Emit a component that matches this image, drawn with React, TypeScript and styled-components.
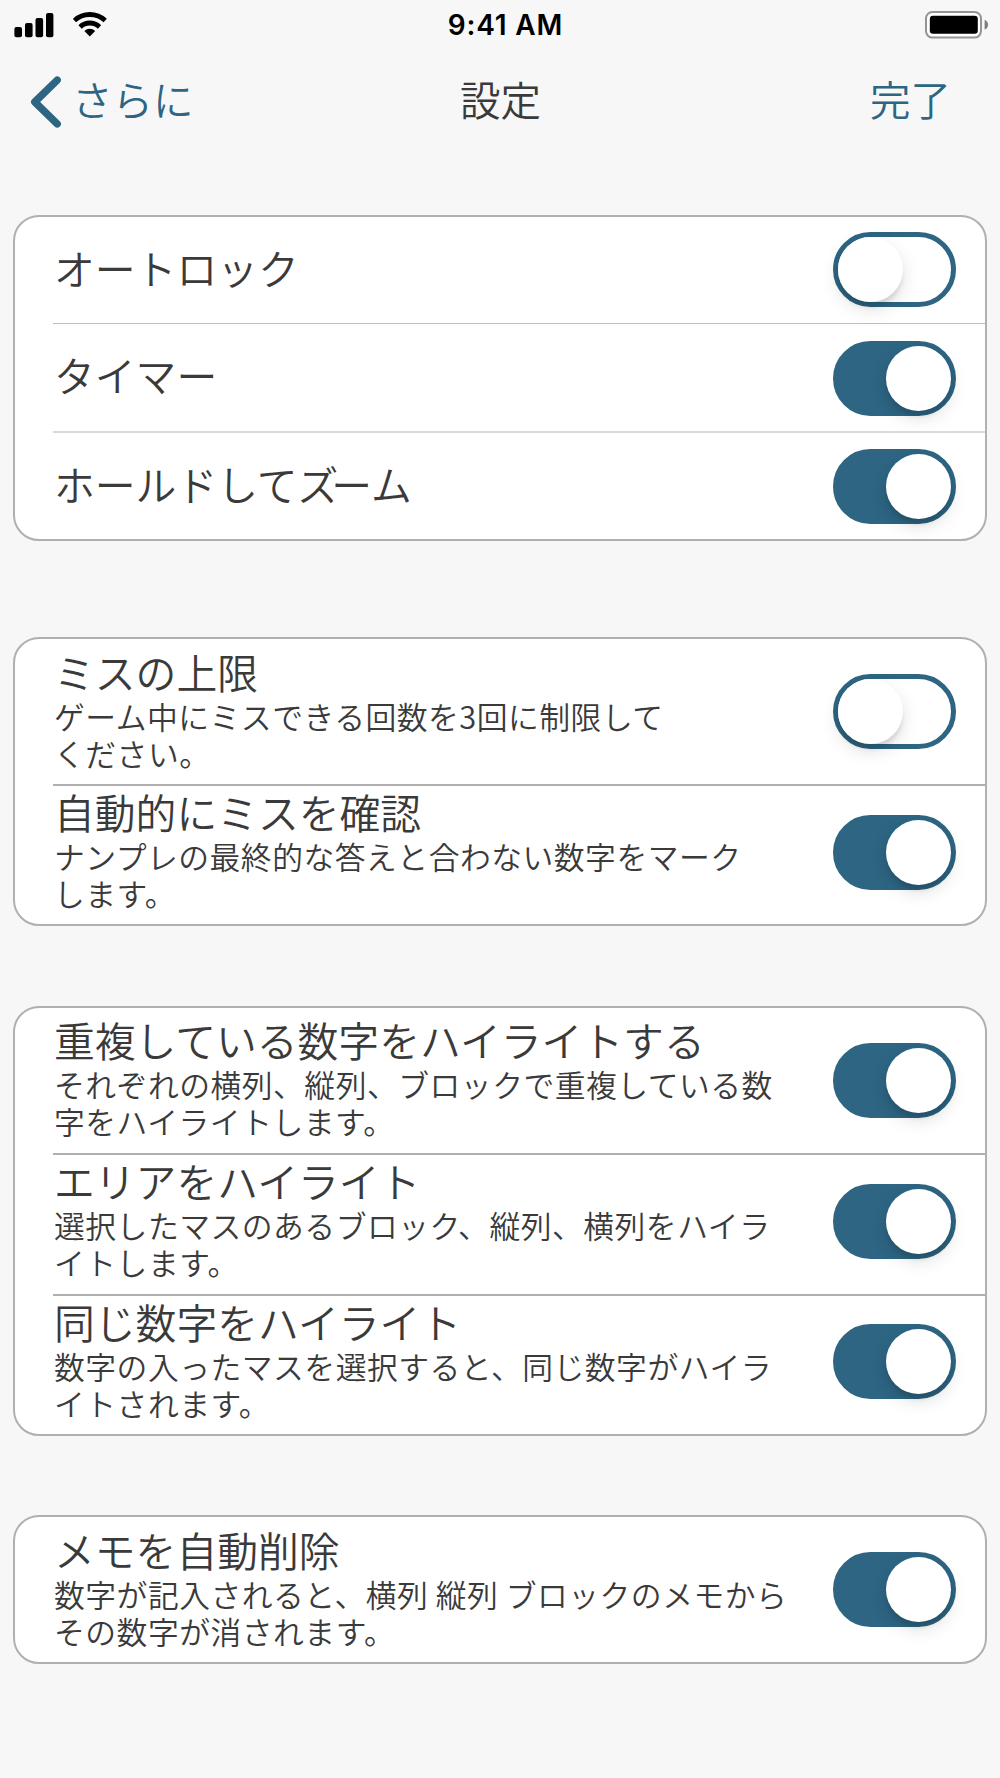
import React, { useState } from "react";
import styled, { createGlobalStyle } from "styled-components";

const accent = "#2d6583";
const ink = "#3a3a3a";
const line = "#b0b0b0";

const GlobalStyle = createGlobalStyle`
  *, *::before, *::after { box-sizing: border-box; }
  html, body { margin: 0; padding: 0; background: #f7f7f7; }
  body { overflow: hidden; }
`;

const Screen = styled.div`
  width: 1000px;
  height: 1778px;
  background: #f7f7f7;
  color: ${ink};
  font-family: "Noto Sans CJK JP", "Noto Sans", sans-serif;
  font-weight: 350;
`;

const StatusBar = styled.div`
  display: grid;
  grid-template-columns: 1fr auto 1fr;
  align-items: center;
  height: 50px;
  padding: 0 12px 0 14px;
`;

const StatusLeft = styled.div`
  display: flex;
  align-items: center;
  gap: 19px;
`;

const StatusRight = styled.div`
  display: flex;
  justify-content: flex-end;
`;

const Clock = styled.div`
  padding-left: 9px;
  font: 600 28px/50px Inter, "Liberation Sans", sans-serif;
  color: #000;
  letter-spacing: 0.8px;
`;

const NavBar = styled.header`
  display: grid;
  grid-template-columns: 1fr auto 1fr;
  align-items: center;
  height: 104px;
  padding: 0 49px 0 30px;
  margin-bottom: 61px;
`;

const NavButton = styled.button<{ $end?: boolean }>`
  display: flex;
  align-items: center;
  justify-self: ${(p) => (p.$end ? "end" : "start")};
  gap: 8px;
  padding: 0;
  border: 0;
  background: none;
  color: ${accent};
  font: inherit;
  font-size: 40.5px;
  line-height: 60px;
`;

const NavText = styled.span`
  padding-bottom: 6px;
`;

const NavTitle = styled.h1`
  margin: 0;
  padding: 0 0 6px 20px;
  font-size: 40.5px;
  font-weight: 350;
  line-height: 60px;
`;

const Card = styled.section<{ $after: number }>`
  margin: 0 13px ${(p) => p.$after}px;
  border: 2px solid ${line};
  border-radius: 26px;
  background: #fff;
`;

const Row = styled.div<{ $height: number; $rule: number; $tone: string; $lead: number }>`
  display: flex;
  justify-content: space-between;
  align-items: flex-start;
  height: ${(p) => p.$height}px;
  margin: ${(p) => p.$lead}px 0 0 38px;
  padding-right: 29px;
  border-bottom: ${(p) => p.$rule}px solid ${(p) => p.$tone};
`;

const Texts = styled.div<{ $stacked: boolean }>`
  padding-top: ${(p) => (p.$stacked ? 1 : 26)}px;
  padding-left: 1px;
`;

const Label = styled.div`
  font-size: 40.8px;
  line-height: 50px;
  white-space: nowrap;
`;

const Tight = styled.span`
  letter-spacing: -7px;
`;

const Detail = styled.div`
  font-size: 30.8px;
  line-height: 37.4px;
  letter-spacing: 0.5px;
  white-space: nowrap;
`;

const Track = styled.button<{ $on: boolean; $top: number }>`
  display: flex;
  flex: none;
  align-items: center;
  justify-content: ${(p) => (p.$on ? "flex-end" : "flex-start")};
  width: 123px;
  height: 75px;
  margin: ${(p) => p.$top}px 0 0;
  padding: 0;
  border: 5px solid ${accent};
  border-radius: 38px;
  background: ${(p) => (p.$on ? accent : "#fff")};
`;

const Knob = styled.span`
  width: 65px;
  height: 65px;
  border-radius: 50%;
  background: #fff;
  box-shadow: 0 7px 18px rgba(0, 0, 0, 0.13), 0 6px 4px -1px rgba(0, 0, 0, 0.1);
`;

type Item = {
  label: string;
  content?: React.ReactNode;
  detail?: string[];
  on: boolean;
  height: number;
  top: number;
  rule?: number;
  tone?: string;
};

const groups: { after: number; lead: number; items: Item[] }[] = [
  {
    after: 96,
    lead: 0,
    items: [
      { label: "オートロック", on: false, height: 107, top: 15, rule: 1, tone: "#bdbdbd" },
      { label: "タイマー", on: true, height: 109, top: 17, rule: 2, tone: "#dadada" },
      {
        label: "ホールドしてズーム",
        content: (
          <>
            ホールドして<Tight>ズ</Tight>ーム
          </>
        ),
        on: true,
        height: 106,
        top: 16,
      },
    ],
  },
  {
    after: 80,
    lead: 7,
    items: [
      {
        label: "ミスの上限",
        detail: ["ゲーム中にミスできる回数を3回に制限して", "ください。"],
        on: false,
        height: 140,
        top: 28,
        rule: 2,
      },
      {
        label: "自動的にミスを確認",
        detail: ["ナンプレの最終的な答えと合わない数字をマーク", "します。"],
        on: true,
        height: 138,
        top: 29,
      },
    ],
  },
  {
    after: 79,
    lead: 6,
    items: [
      {
        label: "重複している数字をハイライトする",
        detail: ["それぞれの横列、縦列、ブロックで重複している数", "字をハイライトします。"],
        on: true,
        height: 141,
        top: 29,
        rule: 2,
      },
      {
        label: "エリアをハイライト",
        detail: ["選択したマスのあるブロック、縦列、横列をハイラ", "イトします。"],
        on: true,
        height: 141,
        top: 29,
        rule: 2,
      },
      {
        label: "同じ数字をハイライト",
        detail: ["数字の入ったマスを選択すると、同じ数字がハイラ", "イトされます。"],
        on: true,
        height: 138,
        top: 28,
      },
    ],
  },
  {
    after: 0,
    lead: 7,
    items: [
      {
        label: "メモを自動削除",
        detail: ["数字が記入されると、横列 縦列 ブロックのメモから", "その数字が消されます。"],
        on: true,
        height: 138,
        top: 28,
      },
    ],
  },
];

function Toggle({ initial, label, top }: { initial: boolean; label: string; top: number }) {
  const [on, setOn] = useState(initial);
  return (
    <Track $on={on} $top={top} role="switch" aria-checked={on} aria-label={label} onClick={() => setOn(!on)}>
      <Knob />
    </Track>
  );
}

function SettingRow({ item, lead }: { item: Item; lead: number }) {
  return (
    <Row $height={item.height} $rule={item.rule ?? 0} $tone={item.tone ?? line} $lead={lead}>
      <Texts $stacked={!!item.detail}>
        <Label>{item.content ?? item.label}</Label>
        {item.detail?.map((t) => <Detail key={t}>{t}</Detail>)}
      </Texts>
      <Toggle initial={item.on} label={item.label} top={item.top} />
    </Row>
  );
}

function Signal() {
  return (
    <svg width="40" height="26" viewBox="0 0 40 26" fill="#000">
      <rect x="0.4" y="15" width="7.6" height="10.3" rx="2" />
      <rect x="11" y="11" width="7.6" height="14.3" rx="2" />
      <rect x="21.5" y="6" width="7.6" height="19.3" rx="2" />
      <rect x="32" y="1" width="7.4" height="24.3" rx="2" />
    </svg>
  );
}

function Wifi() {
  return (
    <svg width="34" height="26" viewBox="0 0 34 26" fill="none" stroke="#000">
      <path d="M1.4 8.6 A22.5 22.5 0 0 1 32.2 8.6" strokeWidth="4.8" />
      <path d="M7.1 14.9 A14 14 0 0 1 26.5 14.9" strokeWidth="4.8" />
      <path d="M16.8 24.4 L11.4 19 A7.8 7.8 0 0 1 22.2 19 Z" fill="#000" stroke="none" />
    </svg>
  );
}

function Battery() {
  return (
    <svg width="63" height="28" viewBox="0 0 63 28">
      <rect x="1" y="1" width="55" height="25.6" rx="6.5" fill="#fff" stroke="#949494" strokeWidth="2" />
      <rect x="4.8" y="4.8" width="48" height="18" rx="3.2" fill="#000" />
      <path d="M59.6 8.8 C62 9.8 63 11.5 63 13.8 C63 16.1 62 17.8 59.6 18.8 Z" fill="#7c7c7c" />
    </svg>
  );
}

function Chevron() {
  return (
    <svg width="34" height="54" viewBox="30 75 34 54" fill="none" stroke={accent}>
      <path
        d="M57.2 80.1 L34.8 102 L57.2 123.9"
        strokeWidth="7.4"
        strokeLinecap="round"
        strokeLinejoin="round"
      />
    </svg>
  );
}

export default function App() {
  return (
    <>
      <GlobalStyle />
      <Screen>
        <StatusBar>
          <StatusLeft>
            <Signal />
            <Wifi />
          </StatusLeft>
          <Clock>9:41 AM</Clock>
          <StatusRight>
            <Battery />
          </StatusRight>
        </StatusBar>
        <NavBar>
          <NavButton>
            <Chevron />
            <NavText>さらに</NavText>
          </NavButton>
          <NavTitle>設定</NavTitle>
          <NavButton $end>
            <NavText>完了</NavText>
          </NavButton>
        </NavBar>
        <main>
          {groups.map((g, i) => (
            <Card key={i} $after={g.after}>
              {g.items.map((item, j) => (
                <SettingRow key={item.label} item={item} lead={j === 0 ? g.lead : 0} />
              ))}
            </Card>
          ))}
        </main>
      </Screen>
    </>
  );
}
